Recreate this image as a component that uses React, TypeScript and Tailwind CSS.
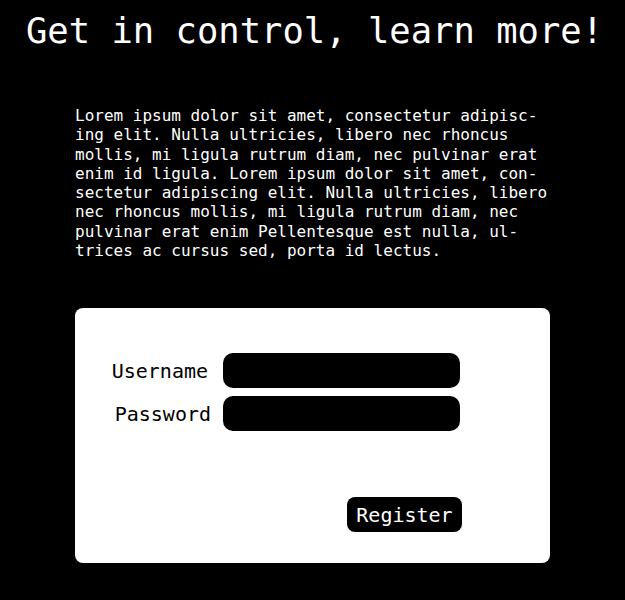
export default function App() {
  return (
    <div className="min-h-screen bg-black text-white font-['DejaVu_Sans_Mono',monospace]">
      <h1 className="pt-[10px] pl-[4px] text-center text-[35.5px] leading-[42px] font-normal">
        Get in control, learn more!
      </h1>

      <p className="mx-[75px] mt-[54px] w-[475px] text-[16px] leading-[19.3px]">
        Lorem ipsum dolor sit amet, consectetur adipisc&shy;ing elit. Nulla ultricies, libero nec rhoncus
        mollis, mi ligula rutrum diam, nec pulvinar erat enim id ligula. Lorem ipsum dolor sit amet,
        con&shy;sectetur adipiscing elit. Nulla ultricies, libero nec rhoncus mollis, mi ligula rutrum
        diam, nec pulvinar erat enim Pellentesque est nulla, ul&shy;trices ac cursus sed, porta id lectus.
      </p>

      <div className="mx-[75px] mt-[48px] w-[475px] rounded-lg bg-white pt-[45px] pb-[31px] text-black">
        <div className="flex flex-col gap-[8px]">
          <div className="flex items-center">
            <label className="w-[133px] text-right text-[20px]">Username</label>
            <input className="ml-[15px] h-[35px] w-[237px] rounded-[10px] bg-black px-3 text-white outline-none" />
          </div>
          <div className="flex items-center">
            <label className="w-[136px] text-right text-[20px]">Password</label>
            <input
              type="password"
              className="ml-[12px] h-[35px] w-[237px] rounded-[10px] bg-black px-3 text-white outline-none"
            />
          </div>
        </div>
        <div className="mt-[66px] flex pl-[272px]">
          <button className="h-[35px] w-[115px] rounded-lg bg-black text-[20px] text-white">
            Register
          </button>
        </div>
      </div>
    </div>
  );
}
